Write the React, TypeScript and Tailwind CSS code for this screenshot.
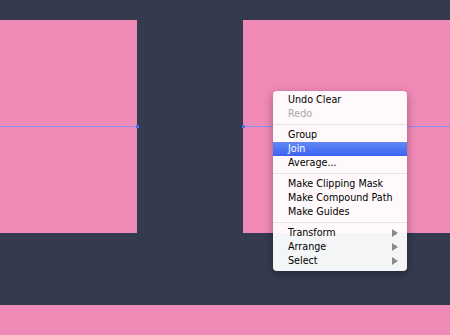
type MenuItem =
  | { kind: 'item'; label: string; disabled?: boolean; active?: boolean; submenu?: boolean }
  | { kind: 'sep' };

const menu: MenuItem[] = [
  { kind: 'item', label: 'Undo Clear' },
  { kind: 'item', label: 'Redo', disabled: true },
  { kind: 'sep' },
  { kind: 'item', label: 'Group' },
  { kind: 'item', label: 'Join', active: true },
  { kind: 'item', label: 'Average...' },
  { kind: 'sep' },
  { kind: 'item', label: 'Make Clipping Mask' },
  { kind: 'item', label: 'Make Compound Path' },
  { kind: 'item', label: 'Make Guides' },
  { kind: 'sep' },
  { kind: 'item', label: 'Transform', submenu: true },
  { kind: 'item', label: 'Arrange', submenu: true },
  { kind: 'item', label: 'Select', submenu: true },
];

function ContextMenu() {
  return (
    <div className="absolute left-[273px] top-[91px] w-[134px] rounded-[4px] bg-white/95 pt-[2px] pb-[3px] shadow-[0_3px_10px_rgba(0,0,0,0.35)] font-['DejaVu_Sans',sans-serif] text-[9.6px] leading-[14px]">
      {menu.map((m, i) =>
        m.kind === 'sep' ? (
          <div key={i} className="my-[3px] h-px bg-[#e4e2e4]" />
        ) : (
          <div
            key={i}
            className={`flex h-[14px] items-center pl-[15px] pr-[8px] ${
              m.active
                ? 'bg-gradient-to-b from-[#6488f6] to-[#3b62f0] text-white'
                : m.disabled
                ? 'text-[#a6a6a6]'
                : 'text-black'
            }`}
          >
            <span className="flex-1">{m.label}</span>
            {m.submenu && (
              <svg width="6" height="8" viewBox="0 0 6 8" className="mr-[1px]">
                <path d="M0 0 L6 4 L0 8 Z" fill="#8a8a8a" />
              </svg>
            )}
          </div>
        )
      )}
    </div>
  );
}

// pink artboard shape with the selected path running through it
function Shape({ handle, className }: { handle: 'left' | 'right'; className: string }) {
  return (
    <div className={`h-[213px] bg-[#f08ab6] pt-[106px] ${className}`}>
      <div className="relative h-px bg-[#8a8ef0]">
        <div
          className={`absolute top-[-1px] h-[3px] w-[3px] bg-[#4a6ff2] ${
            handle === 'right' ? 'right-[-2px]' : 'left-[-1px]'
          }`}
        />
      </div>
    </div>
  );
}

export default function App() {
  return (
    <div className="relative flex h-[335px] w-[450px] flex-col overflow-hidden bg-[#353b4f] pt-[20px]">
      <div className="flex gap-[106px]">
        <Shape handle="right" className="w-[137px]" />
        <Shape handle="left" className="flex-1" />
      </div>
      <div className="mt-auto h-[30px] bg-[#f08ab6]" />
      <ContextMenu />
    </div>
  );
}
